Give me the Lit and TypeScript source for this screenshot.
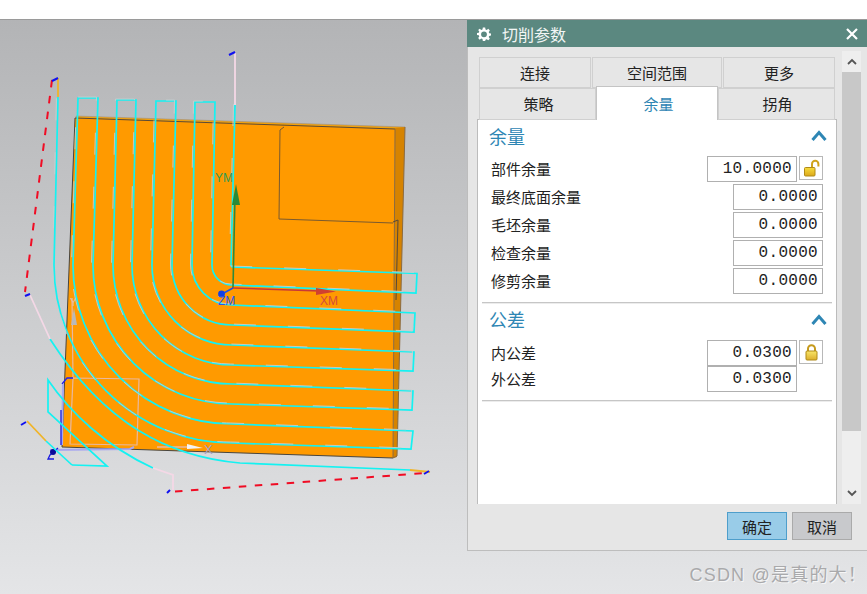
import { LitElement, html, css, svg } from 'lit';
import { customElement } from 'lit/decorators.js';

// tool path: concentric arcs around this point, zigzagging between the top and right loops
const CX = 232;
const CY = 265;
const arcs = [
  { top: 235, left: 231, right: 417, y: 273.5 },
  { top: 215, left: 212, right: 416, y: 293 },
  { top: 195, left: 192, right: 415, y: 313 },
  { top: 176, left: 172, right: 414, y: 332 },
  { top: 156, left: 152, right: 414, y: 352 },
  { top: 136, left: 132, right: 413, y: 371 },
  { top: 117, left: 113, right: 413, y: 391 },
  { top: 98, left: 93, right: 412, y: 410 },
  { top: 78, left: 73, right: 413, y: 431 },
  { top: 58, left: 54, right: 411, y: 449 },
];
const topY = [105, 102, 102, 101, 101, 100, 100, 98, 98, 97];

function toolPath() {
  let d = '';
  arcs.forEach((a, i) => {
    const r = CX - a.left;
    if (i % 2 === 0) {
      const turn = r > 2 ? `A${r},${r} 0 0 0 ${CX},${CY + r}` : `L${CX},${CY + 2}`;
      d += `${i === 0 ? 'M' : 'L'}${a.top},${topY[i]} L${a.left},${CY} ${turn} L${a.right},${a.y} `;
    } else {
      d += `L${a.right},${a.y} L${CX},${CY + r} A${r},${r} 0 0 1 ${a.left},${CY} L${a.top},${topY[i]} `;
    }
  });
  return d;
}

const outerPaths = [
  'M72,465 L107,466 L48,412 L48,380 C70,412 105,446 153,468',
  'M46,441 L72,465',
  'M410,470 L240,463 C170,457 105,425 50,339',
];

const scene = svg`
  <svg class="scene" width="867" height="574" viewBox="0 20 867 574">
    <polygon points="76,116 405,127 395,131 76,119" fill="#f2a20c" stroke="#a09080" stroke-width="0.6"/>
    <polygon points="395,128 405,127 397,457 393,458" fill="#d68300"/>
    <polygon points="75,118 395,129 393,458 62,447" fill="#ff9a00"/>
    <g fill="none" stroke-width="1">
      <path d="M75,118 L395,129" stroke="#5a4a38"/>
      <path d="M75,118 L62,447 L393,458" stroke="#47453f"/>
      <path d="M395,129 L393,458 L397,456 L405,127" stroke="#8a6a40"/>
      <path d="M393,222 L398,220 L396,300" stroke="#55483a"/>
      <path d="M284,127 L280,130 L279,219 L393,223" stroke="#7a5a30"/>
    </g>

    <!-- lower left coordinate system -->
    <g fill="none">
      <path d="M73,378 L139,379 L137,445 L70,444 Z" stroke="#e8b8a0" stroke-width="1.2"/>
      <path d="M72,298 L73,378" stroke="#e8b8a0" stroke-width="1.2"/>
      <path d="M62,384 L67,378 L73,378" stroke="#2222ee" stroke-width="1.3"/>
      <path d="M63,384 L62,445" stroke="#a8a8f0" stroke-width="2"/>
      <path d="M61,410 L61,445" stroke="#1a1ae0" stroke-width="1.3"/>
      <path d="M50,450 L130,449 L134,447" stroke="#a8a8f0" stroke-width="2"/>
      <path d="M58,448 L50,455 L48,459 L54,459" stroke="#1a1ae0" stroke-width="1.3"/>
      <path d="M157,447 L190,447" stroke="#eab8a0" stroke-width="1.4"/>
    </g>
    <polygon points="74,308 71,325 77,325" fill="#b9b9b9"/>
    <polygon points="187,444 187,449 203,448" fill="#f4f4f4"/>
    <circle cx="53" cy="452" r="3" fill="#0a0a9a"/>
    <text class="axis" x="70" y="306" font-size="10" fill="#e8c0a8">Y</text>
    <text class="axis" x="204" y="454" font-size="13" fill="#a0a0c8">X</text>

    <!-- tool path -->
    <g fill="none" stroke="#14f2f2" stroke-width="1.7">
      <path d="${toolPath()}"/>
      ${outerPaths.map((d) => svg`<path d="${d}"/>`)}
    </g>
    <g fill="none" stroke="#c4cfcf" stroke-width="1" stroke-dasharray="22 32" transform="translate(-1.5,-1)" opacity="0.9">
      <path d="${toolPath()}"/>
    </g>
    <g fill="none" stroke="#f4d8e6" stroke-width="1.8">
      <path d="M235,105 L235,53"/>
      <path d="M50,339 L30,295"/>
      <path d="M153,468 L173,475 L173,490"/>
    </g>
    <g fill="none" stroke="#f0b428" stroke-width="1.8">
      <path d="M58,97 L58,78"/>
      <path d="M46,441 L27,421"/>
      <path d="M410,470 L430,472"/>
    </g>
    <path d="M168,492 L426,473" fill="none" stroke="#f00c24" stroke-width="2" stroke-dasharray="7.5 8.5" stroke-dashoffset="-7"/>
    <path d="M52,80 L25,292" fill="none" stroke="#f00c24" stroke-width="2" stroke-dasharray="7.5 8.5"/>
    <g fill="none" stroke="#1010f0" stroke-width="2">
      <path d="M52,81 L58,78"/>
      <path d="M229,55 L235,52"/>
      <path d="M25,296 L30,294"/>
      <path d="M167,493 L170,490"/>
      <path d="M424,474 L429,471"/>
      <path d="M21,425 L26,422"/>
    </g>

    <!-- work coordinate system -->
    <path d="M233,288 L235,195" stroke="#2d8a3c" stroke-width="1.6" fill="none"/>
    <polygon points="236,184 232,205 240,205" fill="#2a8a38"/>
    <path d="M233,288 L320,291" stroke="#c83838" stroke-width="1.6" fill="none"/>
    <polygon points="316,288 316,295 336,291.5" fill="#d04030"/>
    <path d="M233,288 L222,294" stroke="#1e50e8" stroke-width="1.5" fill="none"/>
    <circle cx="221.5" cy="294" r="3.4" fill="#1040e8"/>
    <text class="axis" x="215" y="182" font-size="12" fill="#2f9a55">YM</text>
    <text class="axis" x="320" y="305" font-size="12" fill="#d44a3c">XM</text>
    <text class="axis" x="218" y="305" font-size="12" fill="#2a55e8">ZM</text>
  </svg>
`;

const gear = svg`
  <svg width="14" height="14" viewBox="0 0 24 24">
    <path fill="#fff" fill-rule="evenodd" d="M10 1h4l.6 3.2 2 .8L19.4 3.2 22 6l-1.900 2.700.8 2L24 11.300v3.400l-3.100.6-.8 2 1.900 2.700-2.600 2.800-2.800-1.900-2 .8L14 24h-4l-.6-3.300-2-.8L4.600 21.800 2 19l1.900-2.700-.8-2L0 13.700v-3.400l3.100-.6.800-2L2 5l2.600-2 2.800 2 2-.8L10 1zM12 7.500a5 5 0 1 0 0 10 5 5 0 0 0 0-10z"/>
  </svg>
`;

const chevron = svg`
  <svg width="16" height="11" viewBox="0 0 16 11">
    <path d="M1.500 10 L8 2.500 L14.500 10" fill="none" stroke="#2e86b4" stroke-width="3"/>
  </svg>
`;

const lockOpen = svg`
  <svg width="22" height="22" viewBox="0 0 22 22">
    <defs>
      <linearGradient id="gold-a" x1="0" y1="0" x2="0" y2="1">
        <stop offset="0" stop-color="#f7dc3c"/>
        <stop offset="1" stop-color="#dca81c"/>
      </linearGradient>
    </defs>
    <path d="M12 10 V7 A3.200 3.200 0 0 1 18.400 7 V9.500" fill="none" stroke="#d0a41c" stroke-width="2"/>
    <rect x="4.500" y="10.500" width="10.500" height="8.500" rx="1" fill="url(#gold-a)" stroke="#b08a18"/>
  </svg>
`;

const lockClosed = svg`
  <svg width="13" height="17" viewBox="0 0 13 17">
    <defs>
      <linearGradient id="gold-b" x1="0" y1="0" x2="0" y2="1">
        <stop offset="0" stop-color="#f9e668"/>
        <stop offset="1" stop-color="#dcae2c"/>
      </linearGradient>
    </defs>
    <path d="M3 7 V4.800 A3.500 3.500 0 0 1 10 4.800 V7" fill="none" stroke="#c69a1c" stroke-width="2"/>
    <rect x="1" y="7" width="11" height="9" rx="1" fill="url(#gold-b)" stroke="#b08a18"/>
  </svg>
`;

@customElement('app-root')
export class AppRoot extends LitElement {
  static styles = css`
    :host {
      display: flex;
      flex-direction: column;
      width: 867px;
      height: 594px;
      overflow: hidden;
      background: #fff;
      font-family: "Noto Sans CJK SC", "Liberation Sans", sans-serif;
      color: #222;
    }

    .top-strip {
      height: 19px;
      flex: none;
      background: #fff;
      border-bottom: 1px solid #9a9a9a;
    }

    .viewport {
      position: relative;
      flex: 1;
      background: linear-gradient(#b3b4b6, #e4e5e7);
    }

    .scene {
      display: block;
    }

    .axis {
      font-family: "Liberation Sans", sans-serif;
    }

    .dialog {
      position: absolute;
      left: 467px;
      top: 0;
      width: 400px;
      height: 531px;
      box-sizing: border-box;
      display: flex;
      flex-direction: column;
      background: #e6e6e6;
      border-left: 1px solid #bdbdbd;
      border-bottom: 1px solid #bdbdbd;
    }

    .title {
      height: 27px;
      flex: none;
      display: flex;
      align-items: center;
      margin-left: -1px;
      padding: 0 9px 0 10px;
      background: #5b8880;
      color: #f2f6f5;
      font-size: 16px;
    }

    .title .name {
      margin-left: 11px;
      flex: 1;
    }

    .title svg {
      display: block;
    }

    .body {
      display: flex;
      height: 457px;
      flex: none;
      padding-left: 9px;
    }

    .main {
      width: 360px;
      padding-top: 10px;
      display: flex;
      flex-direction: column;
      box-sizing: border-box;
    }

    .tabs {
      position: relative;
      padding-left: 2px;
      height: 63px;
      flex: none;
      margin-bottom: -1px;
      z-index: 1;
    }

    .tab-row {
      display: flex;
      gap: 1px;
      height: 31px;
    }

    .tab-row + .tab-row {
      gap: 0;
      height: 32px;
    }

    .tab {
      box-sizing: border-box;
      display: flex;
      align-items: center;
      justify-content: center;
      border: 1px solid #d0d0d0;
      font-size: 15px;
      line-height: 1;
      background: #e6e6e6;
    }

    .tab-row + .tab-row .tab {
      padding: 0 0 2px 2px;
    }

    .tab-row .tab.active {
      background: #fff;
      color: #2e86b4;
      border-color: #c4c4c4;
      border-bottom: none;
      height: 34px;
      margin-top: -2px;
      padding: 0 0 0 3px;
    }

    .panel {
      flex: 1;
      box-sizing: border-box;
      background: #fff;
      border: 1px solid #bcbcbc;
      border-bottom: none;
      padding: 0 4px;
    }

    .section {
      box-sizing: border-box;
      border-bottom: 1px solid #c6c6c6;
      box-shadow: 0 1px 0 #ececec;
    }

    .section-head {
      display: flex;
      align-items: center;
      justify-content: space-between;
      box-sizing: border-box;
      padding: 0 5px 5px 7px;
      color: #2e86b4;
      font-size: 18px;
    }

    .section-head svg {
      display: block;
    }

    .rows {
      padding: 0 9px 0 9px;
      display: flex;
      flex-direction: column;
    }

    .rows.spaced {
      gap: 2px;
    }

    .row {
      display: flex;
      align-items: flex-start;
      font-size: 15px;
    }

    .row .label {
      flex: 1;
      line-height: 26px;
    }

    .field {
      box-sizing: border-box;
      width: 90px;
      height: 26px;
      border: 1px solid #b0b0b0;
      background: #fff;
      text-align: right;
      padding-right: 4px;
      font-family: "Liberation Mono", monospace;
      font-size: 16px;
      line-height: 24px;
      color: #222;
      letter-spacing: 0.3px;
    }

    .lock {
      box-sizing: border-box;
      width: 24px;
      height: 24px;
      margin-left: 2px;
      border: 1px solid #b8b8b8;
      display: flex;
      align-items: center;
      justify-content: center;
    }

    .lock.spacer {
      border: none;
    }

    .lock svg {
      display: block;
    }

    .scrollbar {
      width: 19px;
      margin: 4px 0 0 5px;
      background: #eeeeee;
      display: flex;
      flex-direction: column;
      align-items: stretch;
    }

    .scroll-btn {
      height: 21px;
      flex: none;
      display: flex;
      align-items: center;
      justify-content: center;
    }

    .thumb {
      height: 359px;
      flex: none;
      background: #c8c8c8;
    }

    .scroll-rest {
      flex: 1;
    }

    .footer {
      display: flex;
      justify-content: flex-end;
      gap: 5px;
      padding: 8px 15px 0 0;
    }

    .btn {
      box-sizing: border-box;
      width: 60px;
      height: 28px;
      display: flex;
      align-items: center;
      justify-content: center;
      font-size: 15px;
      line-height: 1;
      border: 1px solid #aaa;
      background: #c8c9cc;
    }

    .btn.primary {
      background: #99cce8;
      border-color: #4e9ecb;
    }

    .watermark {
      position: absolute;
      right: 0;
      bottom: 6px;
      font-family: "Liberation Sans", "Noto Sans CJK SC", sans-serif;
      font-size: 18px;
      line-height: 26px;
      color: #a9a9ab;
      text-shadow: 1px 1px 0 #f6f6f6;
      letter-spacing: 1.2px;
    }
  `;

  private tabRows = [
    [['连接', 112], ['空间范围', 130], ['更多', 112]],
    [['策略', 117], ['余量', 122], ['拐角', 117]],
  ] as [string, number][][];

  private renderRow(label: string, value: string, lock?: 'open' | 'closed' | 'spacer') {
    return html`
      <div class="row">
        <span class="label">${label}</span>
        <div class="field">${value}</div>
        ${lock
          ? html`<div class="lock ${lock === 'spacer' ? 'spacer' : ''}">
              ${lock === 'open' ? lockOpen : lock === 'closed' ? lockClosed : ''}
            </div>`
          : ''}
      </div>
    `;
  }

  render() {
    return html`
      <div class="top-strip"></div>
      <div class="viewport">
        ${scene}
        <div class="dialog">
          <div class="title">
            ${gear}
            <span class="name">切削参数</span>
            <svg width="12" height="12" viewBox="0 0 12 12">
              <path d="M1 1 L11 11 M11 1 L1 11" stroke="#fff" stroke-width="2.2"/>
            </svg>
          </div>
          <div class="body">
            <div class="main">
              <div class="tabs">
                ${this.tabRows.map(
                  (row) => html`
                    <div class="tab-row">
                      ${row.map(
                        ([name, w]) => html`
                          <div class="tab ${name === '余量' ? 'active' : ''}" style="width:${w}px">${name}</div>
                        `
                      )}
                    </div>
                  `
                )}
              </div>
              <div class="panel">
                <div class="section" style="height:183px">
                  <div class="section-head" style="height:36px">余量${chevron}</div>
                  <div class="rows spaced">
                    ${this.renderRow('部件余量', '10.0000', 'open')}
                    ${this.renderRow('最终底面余量', '0.0000')}
                    ${this.renderRow('毛坯余量', '0.0000')}
                    ${this.renderRow('检查余量', '0.0000')}
                    ${this.renderRow('修剪余量', '0.0000')}
                  </div>
                </div>
                <div class="section" style="height:98px">
                  <div class="section-head" style="height:37px">公差${chevron}</div>
                  <div class="rows">
                    ${this.renderRow('内公差', '0.0300', 'closed')}
                    ${this.renderRow('外公差', '0.0300', 'spacer')}
                  </div>
                </div>
              </div>
            </div>
            <div class="scrollbar">
              <div class="scroll-btn">
                <svg width="10" height="7" viewBox="0 0 10 7"><path d="M1 6 L5 2 L9 6" fill="none" stroke="#555" stroke-width="1.8"/></svg>
              </div>
              <div class="thumb"></div>
              <div class="scroll-rest"></div>
              <div class="scroll-btn">
                <svg width="10" height="7" viewBox="0 0 10 7"><path d="M1 1 L5 5 L9 1" fill="none" stroke="#555" stroke-width="1.8"/></svg>
              </div>
            </div>
          </div>
          <div class="footer">
            <div class="btn primary">确定</div>
            <div class="btn">取消</div>
          </div>
        </div>
        <div class="watermark">CSDN @是真的大！</div>
      </div>
    `;
  }
}
